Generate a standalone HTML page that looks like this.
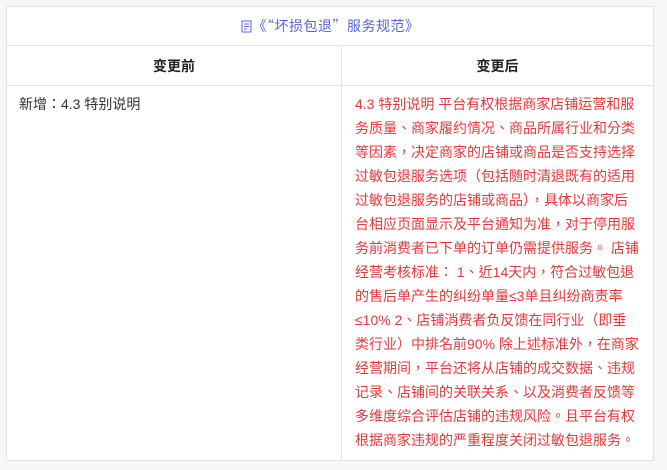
<!DOCTYPE html>
<html><head><meta charset="utf-8"><style>
body{margin:0;background:#f7f7f7;width:667px;height:470px;overflow:hidden;font-family:"Liberation Sans","Noto Sans CJK TC",sans-serif;font-size:14px;color:#333}
.t{position:absolute;left:6px;top:6px;width:648px;height:455px;background:#fff;border:1px solid #e2e2e2;box-sizing:border-box}
.title{position:absolute;left:0;top:0;width:100%;height:39px;line-height:38px;text-align:center;color:#5566dd;border-bottom:1px solid #e2e2e2;box-sizing:border-box;font-family:"Noto Sans CJK SC",sans-serif;letter-spacing:0.5px}
.div{position:absolute;left:334px;top:39px;width:1px;bottom:0;background:#e2e2e2}
.h{position:absolute;top:39px;height:40px;line-height:40px;text-align:center;font-weight:bold;color:#222;border-bottom:1px solid #e2e2e2;box-sizing:border-box}
.l{position:absolute;left:12px;top:85px;line-height:24px}
.r{position:absolute;left:348px;top:85px;line-height:24px;color:#e4393c;white-space:nowrap}
</style></head><body>
<div class="t">
<div class="title"><svg width="11" height="13" viewBox="0 0 11 13" style="vertical-align:-2px;margin-right:1px"><path d="M1 1h9v11H1z M3 4h5 M3 6.5h5 M3 9h3" fill="none" stroke="#5566dd" stroke-width="1"/></svg>《“坏损包退”服务规范》</div>
<div class="h" style="left:0;width:334px">变更前</div>
<div class="h" style="left:335px;width:311px">变更后</div>
<div class="div"></div>
<div class="l">新增：4.3 特别说明</div>
<div class="r">4.3 特别说明 平台有权根据商家店铺运营和服<br>务质量、商家履约情况、商品所属行业和分类<br>等因素，决定商家的店铺或商品是否支持选择<br>过敏包退服务选项（包括随时清退既有的适用<br>过敏包退服务的店铺或商品），具体以商家后<br>台相应页面显示及平台通知为准，对于停用服<br>务前消费者已下单的订单仍需提供服务。 店铺<br>经营考核标准： 1、近14天内，符合过敏包退<br>的售后单产生的纠纷单量≤3单且纠纷商责率<br>≤10% 2、店铺消费者负反馈在同行业（即垂<br>类行业）中排名前90% 除上述标准外，在商家<br>经营期间，平台还将从店铺的成交数据、违规<br>记录、店铺间的关联关系、以及消费者反馈等<br>多维度综合评估店铺的违规风险。且平台有权<br>根据商家违规的严重程度关闭过敏包退服务。</div>
</div>
</body></html>
